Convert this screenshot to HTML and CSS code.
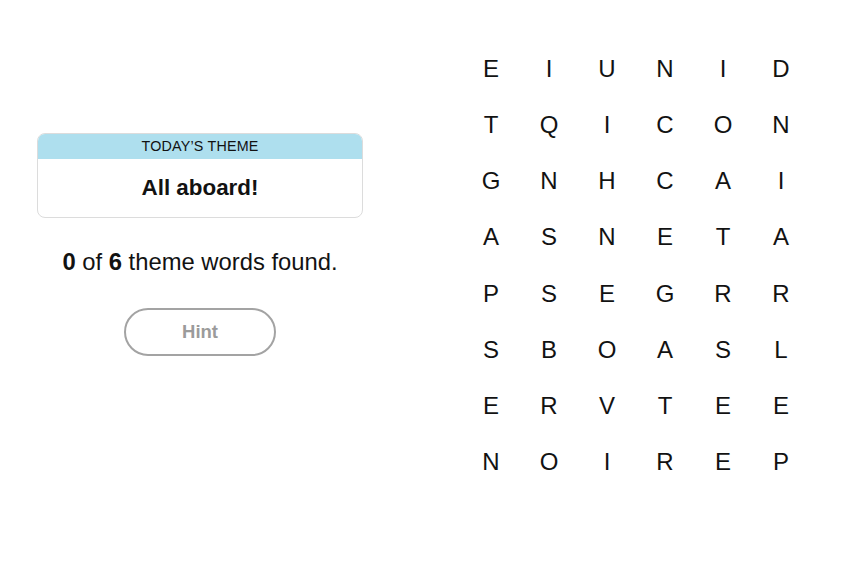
FILE: index.html
```html
<!DOCTYPE html>
<html>
<head>
<meta charset="utf-8">
<link rel="stylesheet" href="styles.css">
</head>
<body>
<main class="game">
  <section class="side">
    <div class="theme-card">
      <div class="theme-head">TODAY’S THEME</div>
      <div class="theme-body">All aboard!</div>
    </div>
    <p class="count"><b>0</b> of <b>6</b> theme words found.</p>
    <button class="hint">Hint</button>
  </section>
  <section class="board">
    <span>E</span><span>I</span><span>U</span><span>N</span><span>I</span><span>D</span>
    <span>T</span><span>Q</span><span>I</span><span>C</span><span>O</span><span>N</span>
    <span>G</span><span>N</span><span>H</span><span>C</span><span>A</span><span>I</span>
    <span>A</span><span>S</span><span>N</span><span>E</span><span>T</span><span>A</span>
    <span>P</span><span>S</span><span>E</span><span>G</span><span>R</span><span>R</span>
    <span>S</span><span>B</span><span>O</span><span>A</span><span>S</span><span>L</span>
    <span>E</span><span>R</span><span>V</span><span>T</span><span>E</span><span>E</span>
    <span>N</span><span>O</span><span>I</span><span>R</span><span>E</span><span>P</span>
  </section>
</main>
</body>
</html>
```
FILE: styles.css
```css
html, body {
  margin: 0;
  padding: 0;
  background: #fff;
  font-family: "Liberation Sans", Arial, sans-serif;
  color: #121212;
}
.game {
  display: flex;
  width: 848px;
  height: 561px;
}
.side {
  width: 400px;
  padding-top: 133px;
  display: flex;
  flex-direction: column;
  align-items: center;
}
.theme-card {
  width: 324px;
  border: 1px solid #dcdcdc;
  border-radius: 8px;
  overflow: hidden;
  box-sizing: content-box;
}
.theme-head {
  background: #aedfee;
  height: 25px;
  line-height: 25px;
  text-align: center;
  font-size: 14.3px;
  letter-spacing: 0.2px;
}
.theme-body {
  height: 58px;
  line-height: 58px;
  text-align: center;
  font-size: 22.4px;
  font-weight: bold;
}
.count {
  margin: 30px 0 0;
  font-size: 23.8px;
  line-height: 27px;
}
.hint {
  margin-top: 33px;
  width: 152px;
  height: 48px;
  border: 2px solid #a3a3a3;
  border-radius: 24px;
  background: #fff;
  color: #9b9b9b;
  font-family: "Liberation Sans", Arial, sans-serif;
  font-size: 18.5px;
  font-weight: bold;
}
.board {
  margin-left: 62px;
  padding-top: 41px;
  display: grid;
  grid-template-columns: repeat(6, 58px);
  grid-auto-rows: 56.15px;
  align-content: start;
}
.board span {
  display: flex;
  align-items: center;
  justify-content: center;
  font-size: 24px;
}
```
